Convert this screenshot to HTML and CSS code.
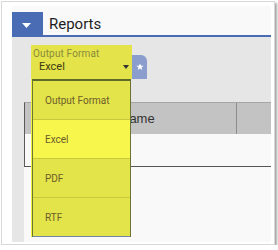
FILE: index.html
```html
<!DOCTYPE html>
<html lang="en">
<head>
    <meta charset="UTF-8">
    <meta name="viewport" content="width=device-width, initial-scale=1.0">
    <title>Reports</title>
    <link rel="stylesheet" href="styles.css">
</head>
<body>
    <div class="frame">
        <div class="page">
            <div class="page-head">
                <button class="toggle" type="button">
                    <svg width="9" height="5" viewBox="0 0 9 5"><path d="M0 0h9L4.5 5z" fill="#fff"/></svg>
                </button>
                <h1 class="title">Reports</h1>
            </div>
            <div class="page-body">
                <div class="toolbar">
                    <div class="select">
                        <div class="select-label">Output Format</div>
                        <div class="select-value">
                            <span>Excel</span>
                            <span class="caret"></span>
                        </div>
                        <ul class="listbox">
                            <li class="option">Output Format</li>
                            <li class="option is-active">Excel</li>
                            <li class="option">PDF</li>
                            <li class="option">RTF</li>
                        </ul>
                    </div>
                    <button class="fav" type="button">
                        <svg width="8" height="8" viewBox="0 0 10 10"><path d="M5 0.5l1.3 3h3.2l-2.6 2 1 3.2L5 6.8 2.1 8.7l1-3.2-2.6-2h3.2z" fill="#fff"/></svg>
                    </button>
                </div>
                <div class="panel">
                    <div class="grid-head">
                        <div class="col-name">Name</div>
                        <div class="col-extra"></div>
                    </div>
                    <div class="grid-row"></div>
                </div>
            </div>
        </div>
    </div>
</body>
</html>
```

FILE: styles.css
```css
body {
    margin: 0;
    background-color: #fff;
    font-family: Roboto, "Liberation Sans", sans-serif;
}

.frame {
    box-sizing: border-box;
    width: 274px;
    height: 244px;
    margin: 1px 0 0 1px;
    padding: 4px 3px 2px 10px;
    border: 1px solid #d8d8d8;
    background-color: #fff;
    box-shadow: 2px 2px 2px rgba(0, 0, 0, 0.35);
}

.page {
    height: 100%;
    display: flex;
    flex-direction: column;
}

/* header */
.page-head {
    display: flex;
    height: 23px;
    padding-top: 6px;
    background-color: #f9f9f9;
    border-bottom: 2px solid #4a6cb5;
}

.toggle {
    width: 31px;
    padding: 0;
    border: none;
    background-color: #4a6cb5;
    display: flex;
    justify-content: center;
    align-items: center;
}

.toggle svg {
    margin-top: 3px;
    margin-left: -2px;
}

.title {
    margin: 0 0 0 6px;
    align-self: center;
    font-size: 15px;
    font-weight: 400;
    color: #1e1e1e;
}

/* body */
.page-body {
    flex: 1;
    display: flex;
    flex-direction: column;
    background-color: #e6e6e6;
}

.toolbar {
    height: 57px;
    padding: 8px 0 0 19px;
    display: flex;
    align-items: flex-start;
}

.select {
    position: relative;
    box-sizing: border-box;
    width: 101px;
    height: 34px;
    padding: 3px 0 0 2px;
    background-color: #e4e44a;
}

.select-label {
    font-size: 10px;
    line-height: 12px;
    letter-spacing: 0.15px;
    color: #8b8a3a;
}

.select-value {
    display: flex;
    align-items: center;
    padding-left: 6px;
    font-size: 11px;
    line-height: 13px;
    color: #3c3912;
}

.caret {
    margin-left: auto;
    margin-right: 3px;
    border-left: 3px solid transparent;
    border-right: 3px solid transparent;
    border-top: 4px solid #333;
}

.listbox {
    position: absolute;
    top: 34px;
    left: 1px;
    z-index: 2;
    box-sizing: border-box;
    width: 99px;
    margin: 0;
    padding: 0;
    list-style: none;
    background-color: #e3e34a;
    border-top: 2px solid #5e6a2c;
    border-left: 1px solid #6b7432;
    border-right: 1px solid #6b7432;
    box-shadow: -1px 0 0 #f2f23c;
}

.option {
    box-sizing: border-box;
    height: 39px;
    padding-left: 12px;
    display: flex;
    align-items: center;
    font-size: 10px;
    color: #6c5d2a;
    border-bottom: 1px solid #c9c93e;
}

.option.is-active {
    background-color: #f6f64c;
}

.option:last-child {
    border-bottom-color: #7386a8;
}

.fav {
    width: 15px;
    height: 24px;
    margin-top: 10px;
    padding: 0;
    border: none;
    border-radius: 0 6px 0 0;
    background-color: #8b9dcc;
    display: flex;
    justify-content: center;
    align-items: center;
}

/* grid */
.panel {
    flex: 1;
    margin-left: 12px;
    background-color: #f9f9f9;
}

.grid-head {
    display: flex;
    box-sizing: border-box;
    height: 32px;
    background-color: #c3c3c3;
    border-top: 1px solid #a5a5a5;
    border-left: 1px solid #5a5a5a;
}

.col-name {
    flex: 1;
    display: flex;
    align-items: center;
    padding-left: 95px;
    font-family: "Liberation Sans", Arial, sans-serif;
    font-size: 13px;
    color: #333;
    border-right: 1px solid #8d8d8d;
}

.col-extra {
    width: 34px;
}

.grid-row {
    box-sizing: border-box;
    height: 33px;
    border-left: 1px solid #5a5a5a;
    border-bottom: 1px solid #555;
}
```
